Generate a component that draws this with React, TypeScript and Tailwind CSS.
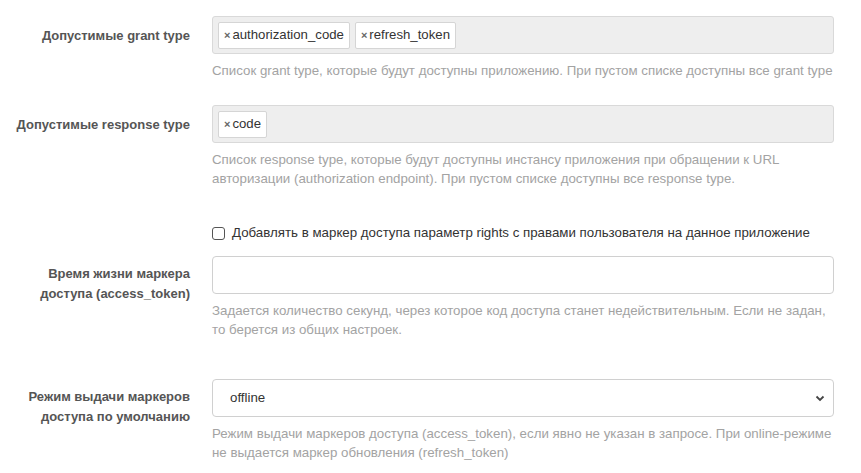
import React from "react";

const font = { fontFamily: '"Liberation Sans", Arial, Helvetica, sans-serif' };

function Label({ children, single }: { children: React.ReactNode; single?: boolean }) {
  return (
    <div
      className={
        single
          ? "w-[190px] shrink-0 pt-[10px] text-right text-[13px] font-bold leading-[20px] text-[#555]"
          : "w-[190px] shrink-0 pt-[8px] text-right text-[13px] font-bold leading-[20px] text-[#555]"
      }
    >
      {children}
    </div>
  );
}

function Help({ children }: { children: React.ReactNode }) {
  return <div className="mt-[7px] text-[13.3px] leading-[19px] text-[#a3a3a3]">{children}</div>;
}

function Tag({ text }: { text: string }) {
  return (
    <div className="flex h-[27px] items-center rounded-[2px] border border-[#d5d5d5] bg-white pl-[5px] pr-[5px] text-[13.2px] text-[#333]">
      <span className="mr-[2px] text-[11px] font-bold text-[#666]">×</span>
      {text}
    </div>
  );
}

export default function App() {
  return (
    <div style={font} className="min-h-[473px] w-[861px] bg-white pr-[27px] pt-[16px]">
      {/* Row 1 */}
      <div className="flex gap-[22px]">
        <Label single>Допустимые grant type</Label>
        <div className="flex-1">
          <div className="flex h-[38px] items-center gap-[5px] rounded-[3px] border border-[#d9d9d9] bg-[#eeeeee] px-[5px]">
            <Tag text="authorization_code" />
            <Tag text="refresh_token" />
          </div>
          <Help>Список grant type, которые будут доступны приложению. При пустом списке доступны все grant type</Help>
        </div>
      </div>

      {/* Row 2 */}
      <div className="mt-[25px] flex gap-[22px]">
        <Label single>Допустимые response type</Label>
        <div className="flex-1">
          <div className="flex h-[38px] items-center gap-[5px] rounded-[3px] border border-[#d9d9d9] bg-[#eeeeee] px-[5px]">
            <Tag text="code" />
          </div>
          <Help>
            Список response type, которые будут доступны инстансу приложения при обращении к URL
            <br />
            авторизации (authorization endpoint). При пустом списке доступны все response type.
          </Help>
        </div>
      </div>

      {/* Checkbox */}
      <div className="mt-[35px] flex gap-[22px]">
        <div className="w-[190px] shrink-0" />
        <label className="flex h-[20px] items-center text-[13.3px] text-[#333]">
          <span className="mr-[7px] inline-block h-[13px] w-[13px] rounded-[3px] border border-[#555] bg-white" />
          Добавлять в маркер доступа параметр rights с правами пользователя на данное приложение
        </label>
      </div>

      {/* Row 3 */}
      <div className="mt-[13px] flex gap-[22px]">
        <Label>
          Время жизни маркера
          <br />
          доступа (access_token)
        </Label>
        <div className="flex-1">
          <div className="h-[38px] rounded-[4px] border border-[#d0d0d0] bg-white" />
          <Help>
            Задается количество секунд, через которое код доступа станет недействительным. Если не задан,
            <br />
            то берется из общих настроек.
          </Help>
        </div>
      </div>

      {/* Row 4 */}
      <div className="mt-[40px] flex gap-[22px]">
        <Label>
          Режим выдачи маркеров
          <br />
          доступа по умолчанию
        </Label>
        <div className="flex-1">
          <div className="flex h-[38px] items-center justify-between rounded-[4px] border border-[#d0d0d0] bg-white pl-[17px] pr-[8px] text-[13.3px] text-[#333]">
            <span>offline</span>
            <svg width="10" height="7" viewBox="0 0 10 7">
              <polyline points="1.5,1.5 5,5 8.5,1.5" fill="none" stroke="#444" strokeWidth="1.8" />
            </svg>
          </div>
          <Help>
            Режим выдачи маркеров доступа (access_token), если явно не указан в запросе. При online-режиме
            <br />
            не выдается маркер обновления (refresh_token)
          </Help>
        </div>
      </div>
    </div>
  );
}
